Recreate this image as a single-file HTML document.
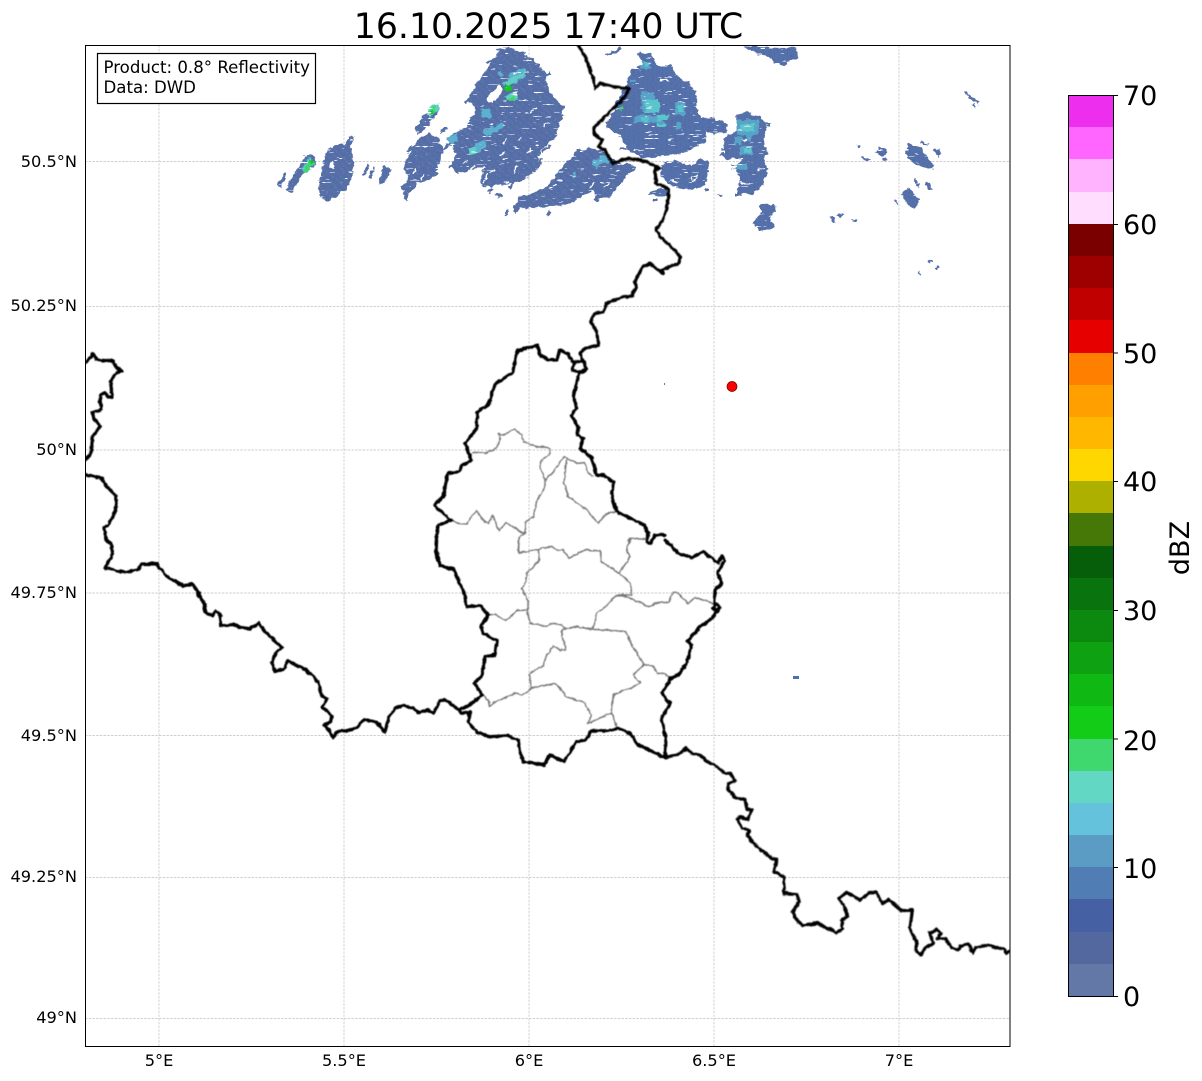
<!DOCTYPE html>
<html><head><meta charset="utf-8"><style>
html,body{margin:0;padding:0;background:#fff}
svg{display:block}
text{font-family:"DejaVu Sans",sans-serif;fill:#000}
.b{fill:none;stroke:#000;stroke-width:3.2;stroke-linejoin:round;stroke-linecap:round;vector-effect:non-scaling-stroke}
.g{fill:none;stroke:#777;stroke-width:1.5;stroke-linejoin:round;vector-effect:non-scaling-stroke}
.gr{stroke:#c0c0c0;stroke-width:.7;stroke-dasharray:2.5 1.2}
.yl text{font-size:16.2px;text-anchor:end}
.xl text{font-size:16.2px;text-anchor:middle}
.cb text{font-size:27px}
.fr{fill:none;stroke:#5670a6;stroke-width:3;stroke-linecap:butt;vector-effect:non-scaling-stroke}
</style></head><body>
<svg width="1202" height="1081" viewBox="0 0 1202 1081" xmlns="http://www.w3.org/2000/svg">
<defs>
<clipPath id="cp"><rect x="85.5" y="45.5" width="924.5" height="1001"/></clipPath>
<filter id="rough" filterUnits="userSpaceOnUse" x="85" y="45" width="925" height="300" color-interpolation-filters="sRGB">
<feTurbulence type="fractalNoise" baseFrequency="0.16 0.22" numOctaves="2" seed="4" result="n1"/>
<feDisplacementMap in="SourceGraphic" in2="n1" scale="6" xChannelSelector="R" yChannelSelector="G" result="d"/>
<feTurbulence type="fractalNoise" baseFrequency="0.09 0.5" numOctaves="2" seed="11"/>
<feColorMatrix type="matrix" values="0 0 0 0 0  0 0 0 0 0  0 0 0 0 0  30 0 0 0 -7.5" result="m"/>
<feComposite in="d" in2="m" operator="in"/>
<feGaussianBlur stdDeviation="0.35"/>
</filter>
<filter id="wig" filterUnits="userSpaceOnUse" x="85" y="45" width="925" height="1001" color-interpolation-filters="sRGB">
<feTurbulence type="fractalNoise" baseFrequency="0.2" numOctaves="2" seed="7" result="n"/>
<feDisplacementMap in="SourceGraphic" in2="n" scale="3" xChannelSelector="R" yChannelSelector="G"/>
<feGaussianBlur stdDeviation="0.45"/>
</filter>
<pattern id="p1" width="16" height="8" patternUnits="userSpaceOnUse" patternTransform="rotate(-48)">
<rect width="16" height="8" fill="#5870a6"/><rect x="0" y="0" width="9" height="2" fill="#4d68a8"/><rect x="6" y="4" width="10" height="2" fill="#4e6cab"/><rect x="12" y="2" width="3" height="1" fill="#8c9cc4"/>
</pattern>
<pattern id="p2" width="14" height="6" patternUnits="userSpaceOnUse">
<rect width="14" height="6" fill="#5871a8"/><rect x="0" y="0" width="7" height="2" fill="#4c68aa"/><rect x="6" y="3" width="8" height="2" fill="#4f72af"/>
</pattern>
</defs>

<!-- title -->
<text x="548.5" y="38" font-size="34.7" text-anchor="middle">16.10.2025 17:40 UTC</text>

<!-- grid -->
<g class="gr" clip-path="url(#cp)">
<path d="M159 45V1046M344 45V1046M529 45V1046M714 45V1046M899 45V1046M85 161.500H1010M85 306.500H1010M85 450H1010M85 593H1010M85 735.500H1010M85 877.500H1010M85 1018.500H1010" fill="none"/>
</g>

<g clip-path="url(#cp)">
<!-- radar echoes -->
<g filter="url(#rough)">
<g transform="translate(270,40) scale(.33333)" fill="url(#p1)">
<polygon points="22,430 45,400 50,405 30,448"/>
<polygon points="45,450 75,395 105,350 125,345 140,350 130,380 100,400 65,460"/>
<polygon points="245,285 255,290 240,320 250,370 250,400 230,450 180,480 165,480 150,470 145,430 160,380 170,330 200,315 220,315"/>
<polygon points="275,405 295,370 300,375 282,410"/>
<polygon points="295,415 308,380 314,383 302,418"/>
<polygon points="325,435 340,375 365,390 345,425"/>
<polygon points="405,480 395,445 415,420 400,380 420,340 440,300 480,280 510,300 520,330 500,400 480,420 440,430 420,460"/>
<polygon points="430,265 490,195 508,200 500,225 445,285"/>
<polygon points="590,180 620,130 650,90 680,50 700,20 725,25 780,50 830,100 835,150 880,205 865,250 860,290 810,330 800,390 740,430 715,430 660,440 630,430 640,380 560,400 540,380 560,340 530,300 550,280 590,260 620,210 600,190"/>
<polygon points="730,510 745,470 790,460 830,440 880,380 920,330 980,325 1020,350 1050,370 1080,375 1100,380 1060,420 1020,470 980,480 970,450 900,490 850,500 800,505 780,500 740,512"/>
<path class="fr" d="M585 185L615 160M600 240L640 200M830 105L840 98M850 205L885 200M860 250L880 225M560 400L600 360M640 440L680 400M655 455L668 445M715 445L760 400M800 385L815 355M535 382L560 365M520 330L545 305M510 275L530 265M650 70L680 55M680 30L720 22M395 445L420 420M405 480L420 440M815 335L840 315M680 470L695 458M705 525L715 515M830 525L842 512M735 515L760 480M975 480L1030 430M1040 420L1090 385M150 470L170 440M410 340L430 320"/>
</g>
<g transform="translate(600,40) scale(.33333)" fill="url(#p2)">
<polygon points="60,290 20,260 35,220 80,130 90,95 130,70 110,40 150,40 170,75 210,75 230,105 270,130 290,160 295,225 315,240 320,300 250,340 160,350 130,355 90,335"/>
<polygon points="295,240 330,230 380,250 385,280 340,280 310,270"/>
<polygon points="430,20 590,25 590,55 550,75 520,70 515,55 470,40"/>
<polygon points="410,225 440,215 480,230 505,255 490,300 500,340 490,360 505,390 490,430 460,460 410,465 420,420 405,380 430,360 375,355 370,300 410,270"/>
<polygon points="185,375 220,360 280,380 300,355 325,365 325,400 315,435 275,450 215,440 190,420 180,400"/>
<polygon points="140,460 200,440 205,470 150,465"/>
<polygon points="480,490 530,495 510,545 525,560 480,575 458,550 480,520"/>
<polygon points="15,42 60,22 65,30 20,50"/>
<polygon points="825,335 840,322 860,330 855,345 835,345"/>
<polygon points="915,340 925,310 960,325 1005,380 1000,388 960,378 930,360"/>
<polygon points="1000,330 1012,322 1025,342 1015,350"/>
<polygon points="960,305 985,312 980,320 958,310"/>
<polygon points="905,460 925,442 958,480 945,508 920,490"/>
<polygon points="938,425 945,418 962,435 955,440"/>
<polygon points="975,435 985,428 998,445 985,452"/>
<polygon points="1092,160 1100,155 1140,190 1135,195 1110,175"/>
<polygon points="1115,190 1120,188 1130,200 1125,206"/>
<polygon points="782,352 790,348 810,358 805,365"/>
<polygon points="768,315 775,312 784,320 778,324"/>
<polygon points="845,352 858,352 860,360 850,362"/>
<polygon points="690,530 700,528 708,545 698,548"/>
<polygon points="708,525 725,518 732,525 715,530"/>
<polygon points="748,538 765,535 770,546 755,545"/>
<polygon points="985,660 995,658 998,668 990,668"/>
<polygon points="1008,678 1014,676 1016,686 1010,686"/>
<polygon points="954,695 960,693 962,703 956,703"/>
<polygon points="882,482 886,480 894,490 890,492"/>
<path class="fr" d="M360 330H395M360 345H385M395 380H420M405 465H425M490 255H510M490 340H505M470 430H490M305 395H330M160 480H170M315 450H330M20 260H50M15 250H40M60 325H90M355 466H365"/>
</g>

<!-- holes and streak gaps -->
<g transform="translate(270,40) scale(.33333)" fill="#fff">
<polygon points="650,180 690,132 698,155 668,188"/>
<polygon points="180,368 190,360 188,385 178,382"/>
<polygon points="520,340 550,310 552,322 530,352"/>
<path fill="none" stroke="#fff" stroke-width="1.5" vector-effect="non-scaling-stroke" d="M745 300l8-8M690 350l10-14M600 390l16-16M820 260l12-12M730 395l14-20M700 310l10-12M640 425l14-24M850 440l12-12M960 440l14-14M1000 445l16-16M430 400l8-12M770 340l12-12M660 400l12-12M780 220l10-10M580 370l14-12M450 420l10-16"/>
</g>
<g transform="translate(600,40) scale(.33333)" stroke="#fff" fill="none">
<path vector-effect="non-scaling-stroke" stroke-width="1.3" d="M180 122h30M190 112h25M195 158h15M280 290h15M205 300h15M235 185h15M420 300h20M420 430h35M470 390h25M395 380h15M275 410h12v14h-12zM215 425h20M105 330h25"/>
</g>

<!-- brighter reflectivity cells -->
<g transform="translate(600,40) scale(.33333)">
<g fill="#58a4c8"><rect x="125" y="65" width="28" height="22"/><rect x="125" y="155" width="36" height="60"/><rect x="100" y="225" width="90" height="24"/><rect x="225" y="185" width="30" height="40"/><rect x="230" y="250" width="15" height="15"/><rect x="410" y="240" width="65" height="45"/><rect x="420" y="320" width="40" height="25"/><rect x="410" y="372" width="30" height="18"/><rect x="405" y="290" width="20" height="24"/><rect x="440" y="280" width="12" height="24"/><rect x="90" y="115" width="18" height="12"/></g>
<g fill="#5cc4cc"><rect x="135" y="65" width="15" height="12"/><rect x="135" y="178" width="42" height="40"/><rect x="170" y="225" width="35" height="16"/><rect x="170" y="250" width="28" height="12"/><rect x="232" y="195" width="18" height="18"/><rect x="425" y="252" width="40" height="22"/><rect x="432" y="326" width="24" height="12"/><rect x="120" y="232" width="28" height="10"/></g>
</g>
<g transform="translate(270,40) scale(.33333)">
<g fill="#5cb0d0"><polygon points="600,325 640,300 650,320 610,345"/><polygon points="640,270 695,250 700,265 650,290"/><polygon points="530,295 560,280 565,305 540,315"/><polygon points="630,210 660,205 665,230 640,235"/><polygon points="715,100 765,85 770,110 730,130"/><polygon points="965,365 1010,345 1015,365 975,382"/><polygon points="905,398 918,395 920,410 908,412"/><polygon points="680,100 695,92 698,105 682,108"/></g>
<g fill="#60d0c4"><polygon points="700,130 745,100 765,95 760,110 715,140"/><polygon points="705,170 740,155 745,180 720,188"/><polygon points="595,325 615,320 618,340 598,345"/><polygon points="470,205 505,190 508,205 480,232"/><polygon points="95,385 120,355 135,365 110,402"/></g>
<g fill="#3ed86e"><polygon points="96,390 118,365 128,375 108,400"/><polygon points="473,215 495,200 498,212 482,228"/><polygon points="708,178 730,165 740,178 722,186"/></g>
<g fill="#12cc18"><polygon points="702,140 724,135 726,150 706,152"/><polygon points="118,362 130,358 132,368 122,375"/><polygon points="480,212 490,208 490,222 482,222"/></g>
<polygon points="1045,205 1062,200 1058,212 1048,212" fill="#3ed86e"/>
</g>
</g>

<!-- tiny features -->
<rect x="793" y="676" width="6" height="3" fill="#4f6fb0"/>
<rect x="664" y="383" width="1" height="2" fill="#777"/>

<!-- grey admin borders -->
<g filter="url(#wig)">
<g transform="translate(420,340) scale(.33333)">
<polyline class="g" points="155,340 185,335 195,340 230,325 240,300 235,280 250,285 285,267 305,285 310,305 350,320 390,325 392,340 365,360 360,380 375,420 375,440 350,485 340,530 318,545 315,580"/>
<polyline class="g" points="95,542 110,550 140,552 168,512 195,545 205,552 218,525 237,572 258,548 305,578 315,580 297,595 295,640"/>
<polyline class="g" points="375,420 400,395 432,350 440,355 432,430 445,470 495,505 535,550 560,520 592,517"/>
<polyline class="g" points="440,355 470,370 495,368 505,400 520,408"/>
<polyline class="g" points="680,598 630,595 620,625 630,650"/>
</g>
<g transform="translate(420,540) scale(.33333)">
<polyline class="g" points="297,0 295,40 355,28 395,20 415,32 430,30 445,55 495,30 540,32 545,65 575,85 598,100"/>
<polyline class="g" points="630,0 620,25 630,50 598,100 632,130 635,165 590,165 620,170 685,200 715,187 745,188 760,158 775,160 805,190 825,172 885,192"/>
<polyline class="g" points="355,28 358,60 320,100 318,125 305,145 325,185 322,210 290,212 258,242 225,222 205,225"/>
<polyline class="g" points="322,210 330,250 375,258 400,250 425,255 435,265 470,260 515,268"/>
<polyline class="g" points="590,165 550,205 530,220 525,250 515,268 560,270 615,275 640,320 655,350 672,373"/>
<polyline class="g" points="672,373 640,405 660,428 640,440 580,465 575,518 590,565"/>
<polyline class="g" points="672,373 700,380 712,400 735,400 748,415"/>
<polyline class="g" points="435,265 425,275 437,330 420,330 400,318 380,345 370,375 327,403 335,445"/>
<polyline class="g" points="187,465 205,480 208,500 220,490 285,460 305,465 335,445 405,430 440,470 495,490 515,525 505,550 575,518"/>
</g>

<!-- thick national borders -->
<g transform="translate(80,340) scale(.33333)">
<polyline class="b" points="17,68 40,40 50,60 100,63 108,82 124,92 105,103 92,125 96,172 84,170 75,157 62,165 60,180 64,208 38,218 42,238 60,258 38,290 33,340 17,360"/>
<polyline class="b" points="5,401 65,415 80,440 105,465 110,490 105,515 85,555 72,565 78,600 92,608 98,640 76,685 92,685 108,692 135,697 160,692 175,688 185,672 230,672 258,708 310,738 338,732 375,795 373,815 397,828 408,813 420,822 422,857 470,855 478,862 510,866 537,850 555,875 607,924 590,935 575,965 585,995 615,985 622,962 675,988 715,1025 725,1068 742,1075 727,1100 755,1128 752,1145 733,1155 748,1170 758,1192 775,1174 800,1172 830,1162 853,1138 893,1148 915,1177 925,1135 945,1105 970,1096 1000,1105 1018,1118 1045,1110 1060,1118"/>
</g>
<g transform="translate(420,540) scale(.33333)">
<polyline class="b" points="42,518 60,482 75,480 118,510 145,498 187,465 162,428 185,410 195,350 225,345 230,302 190,280 183,258 205,225 180,197 140,200 133,160 100,85 60,78 48,40 50,0"/>
<polyline class="b" points="118,510 125,520 150,515 145,545 170,575 205,590 265,587 295,600 300,635 310,665 372,675 390,645 432,665 470,605 495,602 515,572 565,572 595,565 630,580 655,615 735,652"/>
<polyline class="b" points="735,652 738,600 725,535 750,490 725,460 745,430 750,415 775,405 800,370 815,315 802,305 840,260 865,245 890,215 878,203 890,192 900,203 890,215"/>
<polyline class="b" points="883,190 885,150 905,130 893,100 905,75 915,62 905,48 895,70 850,35 815,52 775,40 735,0"/>
</g>
<g transform="translate(420,340) scale(.33333)">
<polyline class="b" points="735,585 705,585 690,610 680,605 685,580 672,555 640,540 590,515 575,470 580,425 550,405 530,405 515,355 495,335 480,325 490,295 472,285 475,265 455,225 470,205 460,170 470,130 478,95"/>
<polyline class="b" points="460,70 445,42 420,30 410,60 385,60 360,45 353,15 292,32 278,97 225,133 205,195 172,215 170,265 135,310 155,360 125,378 118,395 83,400 70,470 43,497 93,542 55,555 50,585 48,620 60,675 100,690"/>
</g>
<g transform="translate(660,740) scale(.33333)">
<polyline class="b" points="15,52 40,47 60,40 78,25 95,40 120,45 150,70 165,75 190,97 210,100 225,122 205,130 205,150 230,175 255,178 260,205 275,212 263,240 240,230 232,240 245,262 268,272 262,288 290,320 335,355 350,358 342,395 372,410 372,460 410,462 418,485 398,515 410,540 430,557 472,550 530,578 548,565 545,540 563,530 550,495 535,475 560,458 600,480 630,457 648,457 668,490 688,480 725,512 757,510 750,565 770,610 768,630 782,645 795,625 820,610 808,578 830,570 843,580 830,595 855,595 875,622 895,630 900,618 925,612 938,638 948,622 985,615 1010,625 1032,625 1040,640 1055,630"/>
</g>
<g transform="translate(570,40) scale(.33333)">
<polyline class="b" points="5,990 15,965 40,965 50,985 35,998 5,990"/>
<polyline class="b" points="40,965 30,940 45,925 85,915 80,875 62,845 72,822 100,815 110,790 160,770 185,768 198,745 195,725 218,680 240,670 265,690 280,700 275,690 325,670 330,650 300,615 275,595 258,572 275,545 290,510 297,450 285,440 258,430 255,385 270,385 220,362 180,355 150,362 128,370 105,330 85,320 98,300 75,285 70,265 100,235 130,205 165,170 178,145 130,140 90,130 75,145 70,115 60,90 50,60 25,15"/>
</g>
</g>

<!-- red marker -->
<circle cx="732" cy="386.500" r="5" fill="#f00" stroke="#600" stroke-width=".7"/>
</g>

<!-- axes frame -->
<rect x="85.500" y="45.500" width="924.500" height="1001" fill="none" stroke="#000" stroke-width="1"/>

<!-- annotation -->
<rect x="97.500" y="53.500" width="218" height="50" fill="#fff" stroke="#000" stroke-width="1.200"/>
<text x="103.500" y="73" font-size="16.6">Product: 0.8° Reflectivity</text>
<text x="103.500" y="93" font-size="16.6">Data: DWD</text>

<!-- axis labels -->
<g class="yl">
<text x="77" y="167">50.5°N</text>
<text x="77" y="311">50.25°N</text>
<text x="77" y="455">50°N</text>
<text x="77" y="598">49.75°N</text>
<text x="77" y="741">49.5°N</text>
<text x="77" y="882">49.25°N</text>
<text x="77" y="1023">49°N</text>
</g>
<g class="xl">
<text x="159" y="1066">5°E</text>
<text x="344" y="1066">5.5°E</text>
<text x="529" y="1066">6°E</text>
<text x="714" y="1066">6.5°E</text>
<text x="899" y="1066">7°E</text>
</g>

<!-- colorbar -->
<g shape-rendering="crispEdges">
<rect x="1068" y="95" width="45" height="33" fill="#ee2eee"/>
<rect x="1068" y="127" width="45" height="33" fill="#ff66ff"/>
<rect x="1068" y="159" width="45" height="33" fill="#ffb3ff"/>
<rect x="1068" y="192" width="45" height="33" fill="#ffddff"/>
<rect x="1068" y="224" width="45" height="33" fill="#7a0000"/>
<rect x="1068" y="256" width="45" height="33" fill="#9e0000"/>
<rect x="1068" y="288" width="45" height="33" fill="#c00000"/>
<rect x="1068" y="320" width="45" height="33" fill="#e60000"/>
<rect x="1068" y="353" width="45" height="33" fill="#ff7f00"/>
<rect x="1068" y="385" width="45" height="33" fill="#ff9f00"/>
<rect x="1068" y="417" width="45" height="33" fill="#ffb700"/>
<rect x="1068" y="449" width="45" height="33" fill="#ffd700"/>
<rect x="1068" y="481" width="45" height="33" fill="#aeb000"/>
<rect x="1068" y="513" width="45" height="33" fill="#467808"/>
<rect x="1068" y="546" width="45" height="33" fill="#075e0a"/>
<rect x="1068" y="578" width="45" height="33" fill="#09740e"/>
<rect x="1068" y="610" width="45" height="33" fill="#0c8a10"/>
<rect x="1068" y="642" width="45" height="33" fill="#0ea212"/>
<rect x="1068" y="674" width="45" height="33" fill="#10b814"/>
<rect x="1068" y="706" width="45" height="33" fill="#12cc18"/>
<rect x="1068" y="739" width="45" height="33" fill="#3ed86e"/>
<rect x="1068" y="771" width="45" height="33" fill="#62d8c4"/>
<rect x="1068" y="803" width="45" height="33" fill="#64c2dc"/>
<rect x="1068" y="835" width="45" height="33" fill="#5a9cc4"/>
<rect x="1068" y="867" width="45" height="33" fill="#4f7db4"/>
<rect x="1068" y="899" width="45" height="33" fill="#4660a4"/>
<rect x="1068" y="932" width="45" height="33" fill="#5468a0"/>
<rect x="1068" y="964" width="45" height="32" fill="#6478a8"/>
</g>
<rect x="1068.500" y="95.500" width="45" height="901" fill="none" stroke="#000" stroke-width="1"/>
<path d="M1113 95.500h5M1113 224.500h5M1113 353h5M1113 481.500h5M1113 610.500h5M1113 739h5M1113 867.500h5M1113 996.500h5" stroke="#000" stroke-width="1"/>
<g class="cb">
<text x="1123" y="105">70</text>
<text x="1123" y="234">60</text>
<text x="1123" y="363">50</text>
<text x="1123" y="491">40</text>
<text x="1123" y="620">30</text>
<text x="1123" y="750">20</text>
<text x="1123" y="878">10</text>
<text x="1123" y="1006">0</text>
</g>
<text transform="translate(1189,548) rotate(-90)" font-size="27" text-anchor="middle">dBZ</text>
</svg>
</body></html>
